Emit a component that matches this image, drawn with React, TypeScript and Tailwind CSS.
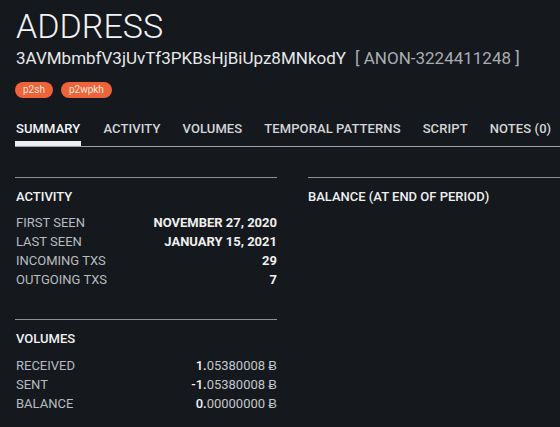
import React from 'react';

const tabs = ['SUMMARY', 'ACTIVITY', 'VOLUMES', 'TEMPORAL PATTERNS', 'SCRIPT', 'NOTES (0)'];

const activity = [
    ['FIRST SEEN', 'NOVEMBER 27, 2020'],
    ['LAST SEEN', 'JANUARY 15, 2021'],
    ['INCOMING TXS', '29'],
    ['OUTGOING TXS', '7'],
];

const volumes = [
    ['RECEIVED', '1.', '05380008'],
    ['SENT', '-1.', '05380008'],
    ['BALANCE', '0.', '00000000'],
];

const App = () => {
    return (
        <div className="w-[560px] h-[427px] overflow-hidden bg-[#15181c] text-white pl-[15px] pt-[6px]" style={{ fontFamily: 'Roboto, sans-serif' }}>
            {/* Header */}
            <h1 className="text-[34px] font-light leading-[40px] text-[#f2f3f4] pl-px">ADDRESS</h1>
            <div className="flex items-baseline gap-[9px] mt-px pl-px text-[17px] leading-[22px]">
                <span className="text-[#e6e8ea]">3AVMbmbfV3jUvTf3PKBsHjBiUpz8MNkodY</span>
                <span className="text-[#a9adb2]">[ ANON-3224411248 ]</span>
            </div>
            <div className="flex gap-[8px] mt-[13px]">
                <span className="bg-[#ee6339] text-[#fbe6df] text-[10px] leading-[16px] px-[8px] rounded-full">p2sh</span>
                <span className="bg-[#ee6339] text-[#fbe6df] text-[10px] leading-[16px] px-[8px] rounded-full">p2wpkh</span>
            </div>

            {/* Tabs */}
            <div className="flex gap-[22px] mt-[23px] border-b border-[#9ea2a6] pl-px">
                {tabs.map((t, i) => (
                    <div
                        key={t}
                        className={
                            'text-[13px] font-medium leading-[16px] pb-[4px] border-b-[5px] tracking-[0.1px] ' +
                            (i === 0 ? 'border-[#eef0f1] text-[#f4f5f6] -ml-px pl-px pr-px' : 'border-transparent text-[#d3d6d9]')
                        }
                    >
                        {t}
                    </div>
                ))}
            </div>

            <div className="flex gap-[31px] mt-[30px]">
                {/* Left column */}
                <div className="w-[262px]">
                    <div className="border-t border-[#8d9195] pt-[11px]">
                        <div className="text-[13px] font-medium text-[#f1f2f3] leading-[16px] pl-px">ACTIVITY</div>
                        <div className="mt-[8px]">
                            {activity.map(([k, v]) => (
                                <div key={k} className="flex justify-between text-[13px] leading-[19px]">
                                    <span className="text-[#b8bcc0] pl-px">{k}</span>
                                    <span className="font-bold text-[#eef0f1]">{v}</span>
                                </div>
                            ))}
                        </div>
                    </div>

                    <div className="border-t border-[#8d9195] pt-[11px] mt-[30px]">
                        <div className="text-[13px] font-medium text-[#f1f2f3] leading-[16px] pl-px">VOLUMES</div>
                        <div className="mt-[9px]">
                            {volumes.map(([k, a, b]) => (
                                <div key={k} className="flex justify-between text-[13px] leading-[19px]">
                                    <span className="text-[#b8bcc0] pl-px">{k}</span>
                                    <span className="text-[#c3c7cb]">
                                        <span className="text-[#f1f2f3] font-medium">{a}</span>
                                        {b} Ƀ
                                    </span>
                                </div>
                            ))}
                        </div>
                    </div>
                </div>

                {/* Right column */}
                <div className="flex-1">
                    <div className="border-t border-[#8d9195] pt-[11px]">
                        <div className="text-[13px] font-medium text-[#eef0f1] leading-[16px]">BALANCE (AT END OF PERIOD)</div>
                    </div>
                </div>
            </div>
        </div>
    );
};

export default App;
